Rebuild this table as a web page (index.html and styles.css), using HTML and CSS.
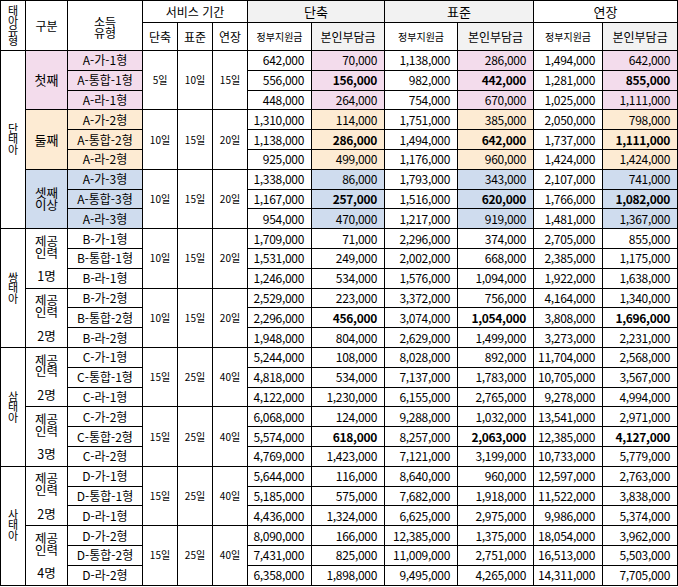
FILE: index.html
```html
<!DOCTYPE html>
<html lang="ko">
<head>
<meta charset="utf-8">
<title>태아유형별 서비스 가격</title>
<link rel="stylesheet" href="styles.css">
</head>
<body>
<table class="tbl">
<colgroup>
<col class="c1"><col class="c2"><col class="c3"><col class="c4"><col class="c4"><col class="c4">
<col class="c7"><col class="c8"><col class="c8"><col class="c10"><col class="c11"><col class="c12">
</colgroup>
<thead>
<tr class="h1">
<th rowspan="2" class="vt"><span class="vtx vth">태아유형</span></th>
<th rowspan="2" class="hd">구분</th>
<th rowspan="2" class="hd two">소득<br>유형</th>
<th colspan="3" class="hd">서비스 기간</th>
<th colspan="2" class="big gray">단축</th>
<th colspan="2" class="big gray">표준</th>
<th colspan="2" class="big">연장</th>
</tr>
<tr class="h2">
<th class="hd">단축</th><th class="hd">표준</th><th class="hd">연장</th>
<th class="small">정부지원금</th><th class="mid gray">본인부담금</th>
<th class="small">정부지원금</th><th class="mid gray">본인부담금</th>
<th class="small">정부지원금</th><th class="mid gray">본인부담금</th>
</tr>
</thead>
<tbody>
<tr class="r1">
<td rowspan="9" class="vt"><span class="vtx">단태아</span></td>
<td rowspan="3" class="grp pink">첫째</td>
<td class="code pink">A-가-1형</td>
<td rowspan="3" class="days">5일</td><td rowspan="3" class="days">10일</td><td rowspan="3" class="days">15일</td>
<td class="num">642,000</td><td class="num pink">70,000</td><td class="num">1,138,000</td><td class="num pink">286,000</td><td class="num">1,494,000</td><td class="num pink">642,000</td>
</tr>
<tr class="r"><td class="code pink">A-통합-1형</td>
<td class="num">556,000</td><td class="num pink b">156,000</td><td class="num">982,000</td><td class="num pink b">442,000</td><td class="num">1,281,000</td><td class="num pink b">855,000</td></tr>
<tr class="r"><td class="code pink">A-라-1형</td>
<td class="num">448,000</td><td class="num pink">264,000</td><td class="num">754,000</td><td class="num pink">670,000</td><td class="num">1,025,000</td><td class="num pink">1,111,000</td></tr>

<tr class="r"><td rowspan="3" class="grp peach">둘째</td><td class="code peach">A-가-2형</td>
<td rowspan="3" class="days">10일</td><td rowspan="3" class="days">15일</td><td rowspan="3" class="days">20일</td>
<td class="num">1,310,000</td><td class="num peach">114,000</td><td class="num">1,751,000</td><td class="num peach">385,000</td><td class="num">2,050,000</td><td class="num peach">798,000</td></tr>
<tr class="r"><td class="code peach">A-통합-2형</td>
<td class="num">1,138,000</td><td class="num peach b">286,000</td><td class="num">1,494,000</td><td class="num peach b">642,000</td><td class="num">1,737,000</td><td class="num peach b">1,111,000</td></tr>
<tr class="r"><td class="code peach">A-라-2형</td>
<td class="num">925,000</td><td class="num peach">499,000</td><td class="num">1,176,000</td><td class="num peach">960,000</td><td class="num">1,424,000</td><td class="num peach">1,424,000</td></tr>

<tr class="r"><td rowspan="3" class="grp blue tight">셋째<br>이상</td><td class="code blue">A-가-3형</td>
<td rowspan="3" class="days">10일</td><td rowspan="3" class="days">15일</td><td rowspan="3" class="days">20일</td>
<td class="num">1,338,000</td><td class="num blue">86,000</td><td class="num">1,793,000</td><td class="num blue">343,000</td><td class="num">2,107,000</td><td class="num blue">741,000</td></tr>
<tr class="r"><td class="code blue">A-통합-3형</td>
<td class="num">1,167,000</td><td class="num blue b">257,000</td><td class="num">1,516,000</td><td class="num blue b">620,000</td><td class="num">1,766,000</td><td class="num blue b">1,082,000</td></tr>
<tr class="r"><td class="code blue">A-라-3형</td>
<td class="num">954,000</td><td class="num blue">470,000</td><td class="num">1,217,000</td><td class="num blue">919,000</td><td class="num">1,481,000</td><td class="num blue">1,367,000</td></tr>

<tr class="r"><td rowspan="6" class="vt"><span class="vtx">쌍태아</span></td>
<td rowspan="3" class="grp staff">제공<br>인력<br><br>1명</td><td class="code">B-가-1형</td>
<td rowspan="3" class="days">10일</td><td rowspan="3" class="days">15일</td><td rowspan="3" class="days">20일</td>
<td class="num">1,709,000</td><td class="num">71,000</td><td class="num">2,296,000</td><td class="num">374,000</td><td class="num">2,705,000</td><td class="num">855,000</td></tr>
<tr class="r"><td class="code">B-통합-1형</td>
<td class="num">1,531,000</td><td class="num">249,000</td><td class="num">2,002,000</td><td class="num">668,000</td><td class="num">2,385,000</td><td class="num">1,175,000</td></tr>
<tr class="r"><td class="code">B-라-1형</td>
<td class="num">1,246,000</td><td class="num">534,000</td><td class="num">1,576,000</td><td class="num">1,094,000</td><td class="num">1,922,000</td><td class="num">1,638,000</td></tr>
<tr class="r"><td rowspan="3" class="grp staff">제공<br>인력<br><br>2명</td><td class="code">B-가-2형</td>
<td rowspan="3" class="days">10일</td><td rowspan="3" class="days">15일</td><td rowspan="3" class="days">20일</td>
<td class="num">2,529,000</td><td class="num">223,000</td><td class="num">3,372,000</td><td class="num">756,000</td><td class="num">4,164,000</td><td class="num">1,340,000</td></tr>
<tr class="r"><td class="code">B-통합-2형</td>
<td class="num">2,296,000</td><td class="num b">456,000</td><td class="num">3,074,000</td><td class="num b">1,054,000</td><td class="num">3,808,000</td><td class="num b">1,696,000</td></tr>
<tr class="r"><td class="code">B-라-2형</td>
<td class="num">1,948,000</td><td class="num">804,000</td><td class="num">2,629,000</td><td class="num">1,499,000</td><td class="num">3,273,000</td><td class="num">2,231,000</td></tr>

<tr class="r"><td rowspan="6" class="vt"><span class="vtx">삼태아</span></td>
<td rowspan="3" class="grp staff">제공<br>인력<br><br>2명</td><td class="code">C-가-1형</td>
<td rowspan="3" class="days">15일</td><td rowspan="3" class="days">25일</td><td rowspan="3" class="days">40일</td>
<td class="num">5,244,000</td><td class="num">108,000</td><td class="num">8,028,000</td><td class="num">892,000</td><td class="num">11,704,000</td><td class="num">2,568,000</td></tr>
<tr class="r"><td class="code">C-통합-1형</td>
<td class="num">4,818,000</td><td class="num">534,000</td><td class="num">7,137,000</td><td class="num">1,783,000</td><td class="num">10,705,000</td><td class="num">3,567,000</td></tr>
<tr class="r"><td class="code">C-라-1형</td>
<td class="num">4,122,000</td><td class="num">1,230,000</td><td class="num">6,155,000</td><td class="num">2,765,000</td><td class="num">9,278,000</td><td class="num">4,994,000</td></tr>
<tr class="r"><td rowspan="3" class="grp staff">제공<br>인력<br><br>3명</td><td class="code">C-가-2형</td>
<td rowspan="3" class="days">15일</td><td rowspan="3" class="days">25일</td><td rowspan="3" class="days">40일</td>
<td class="num">6,068,000</td><td class="num">124,000</td><td class="num">9,288,000</td><td class="num">1,032,000</td><td class="num">13,541,000</td><td class="num">2,971,000</td></tr>
<tr class="r"><td class="code">C-통합-2형</td>
<td class="num">5,574,000</td><td class="num b">618,000</td><td class="num">8,257,000</td><td class="num b">2,063,000</td><td class="num">12,385,000</td><td class="num b">4,127,000</td></tr>
<tr class="r"><td class="code">C-라-2형</td>
<td class="num">4,769,000</td><td class="num">1,423,000</td><td class="num">7,121,000</td><td class="num">3,199,000</td><td class="num">10,733,000</td><td class="num">5,779,000</td></tr>

<tr class="r"><td rowspan="6" class="vt"><span class="vtx">사태아</span></td>
<td rowspan="3" class="grp staff">제공<br>인력<br><br>2명</td><td class="code">D-가-1형</td>
<td rowspan="3" class="days">15일</td><td rowspan="3" class="days">25일</td><td rowspan="3" class="days">40일</td>
<td class="num">5,644,000</td><td class="num">116,000</td><td class="num">8,640,000</td><td class="num">960,000</td><td class="num">12,597,000</td><td class="num">2,763,000</td></tr>
<tr class="r"><td class="code">D-통합-1형</td>
<td class="num">5,185,000</td><td class="num">575,000</td><td class="num">7,682,000</td><td class="num">1,918,000</td><td class="num">11,522,000</td><td class="num">3,838,000</td></tr>
<tr class="r"><td class="code">D-라-1형</td>
<td class="num">4,436,000</td><td class="num">1,324,000</td><td class="num">6,625,000</td><td class="num">2,975,000</td><td class="num">9,986,000</td><td class="num">5,374,000</td></tr>
<tr class="r"><td rowspan="3" class="grp staff">제공<br>인력<br><br>4명</td><td class="code">D-가-2형</td>
<td rowspan="3" class="days">15일</td><td rowspan="3" class="days">25일</td><td rowspan="3" class="days">40일</td>
<td class="num">8,090,000</td><td class="num">166,000</td><td class="num">12,385,000</td><td class="num">1,375,000</td><td class="num">18,054,000</td><td class="num">3,962,000</td></tr>
<tr class="r"><td class="code">D-통합-2형</td>
<td class="num">7,431,000</td><td class="num">825,000</td><td class="num">11,009,000</td><td class="num">2,751,000</td><td class="num">16,513,000</td><td class="num">5,503,000</td></tr>
<tr class="r"><td class="code">D-라-2형</td>
<td class="num">6,358,000</td><td class="num">1,898,000</td><td class="num">9,495,000</td><td class="num">4,265,000</td><td class="num">14,311,000</td><td class="num">7,705,000</td></tr>
</tbody>
</table>
</body>
</html>
```

FILE: styles.css
```css
html, body {
  margin: 0;
  padding: 0;
  background: #ffffff;
}
body {
  font-family: "Noto Sans CJK KR", "Noto Sans", sans-serif;
  color: #000000;
}
.tbl {
  border-collapse: collapse;
  table-layout: fixed;
  width: 677px;
}
.c1 { width: 25px; }
.c2 { width: 42px; }
.c3 { width: 75px; }
.c4 { width: 35px; }
.c7 { width: 64px; }
.c8 { width: 73px; }
.c10 { width: 76px; }
.c11 { width: 69px; }
.c12 { width: 75px; }

.tbl th, .tbl td {
  border: 1px solid #000000;
  padding: 0;
  text-align: center;
  vertical-align: middle;
  font-weight: normal;
  overflow: hidden;
  white-space: nowrap;
}
.tbl .h1 { height: 22px; }
.tbl .h2 { height: 28px; }
.tbl .r, .tbl .r1 { height: 19.8px; }

.tbl .hd { font-size: 12px; line-height: 14px; }
.tbl .two { line-height: 11.5px; padding-top: 3px; }
.tbl .big { font-size: 13px; line-height: 16px; }
.tbl .small { font-size: 10px; line-height: 12px; }
.tbl .mid { font-size: 12px; line-height: 14px; }
.tbl .gray { background: #f2f2f2; }

.tbl .vt {
  font-size: 11px;
  line-height: 1;
}
.vtx {
  display: inline-block;
  writing-mode: vertical-lr;
  text-orientation: upright;
  font-size: 11px;
  line-height: 14px;
  letter-spacing: -0.5px;
}
.vtx.vth {
  font-size: 11px;
  letter-spacing: -0.8px;
}
.tbl .grp {
  font-size: 13px;
  line-height: 14px;
}
.tbl .tight {
  font-size: 12.5px;
  line-height: 12px;
}
.tbl .staff {
  font-size: 12.5px;
  line-height: 11.8px;
}
.tbl .code {
  font-size: 12px;
  line-height: 14px;
}
.tbl .days {
  font-size: 10px;
  line-height: 12px;
}
.tbl .num {
  font-size: 12px;
  line-height: 14px;
  letter-spacing: -0.3px;
  text-align: right;
  padding-right: 7px;
}
.tbl .b { font-weight: bold; }

.tbl .pink { background: #f3dcec; }
.tbl .peach { background: #fdebd3; }
.tbl .blue { background: #cfdcee; }
```
